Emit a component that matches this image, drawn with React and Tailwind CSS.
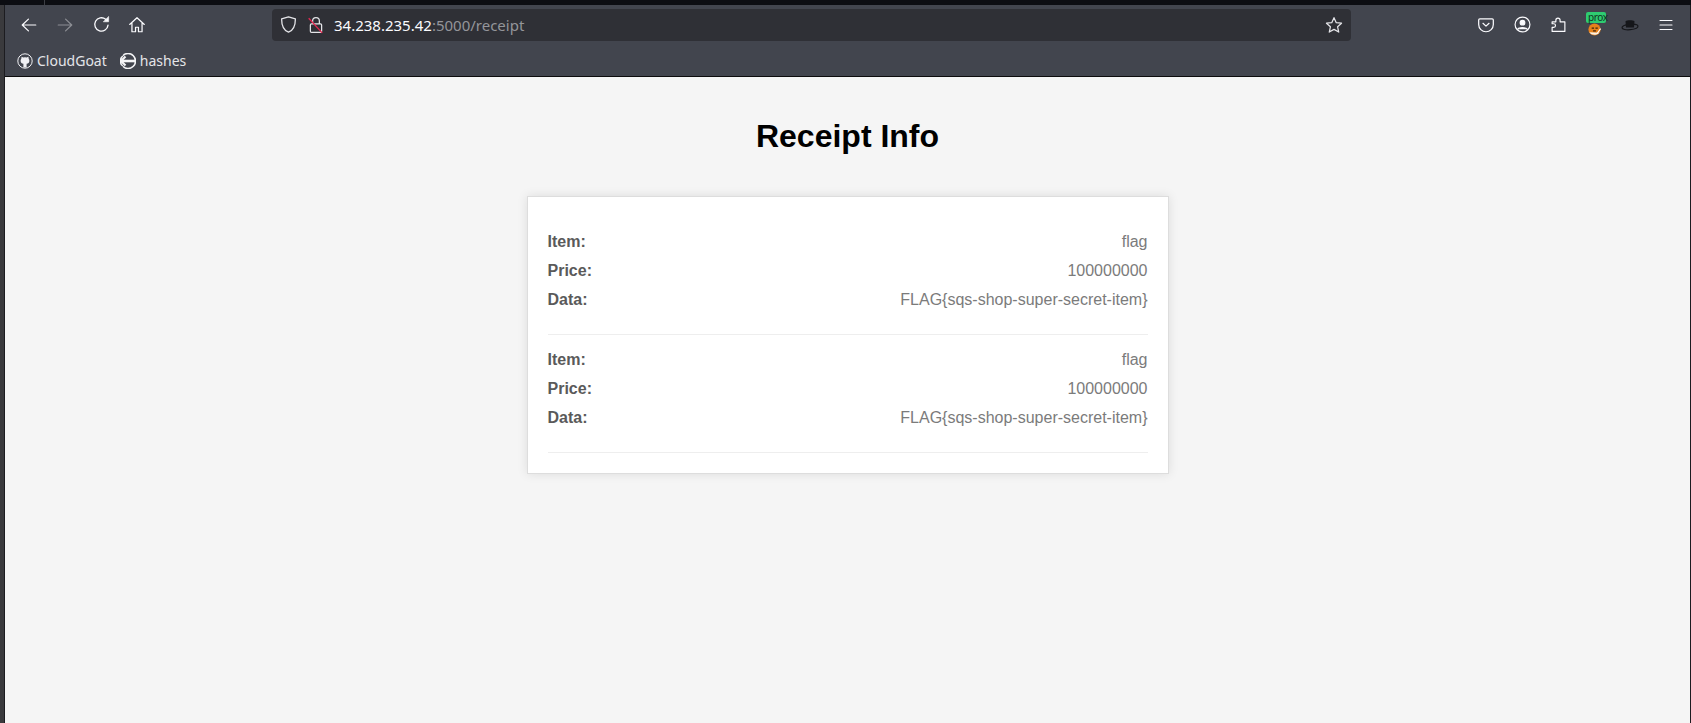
import React from 'react';

const uiFont = { fontFamily: '"Noto Sans", sans-serif' };

const receipts = [
  { item: 'flag', price: '100000000', data: 'FLAG{sqs-shop-super-secret-item}' },
  { item: 'flag', price: '100000000', data: 'FLAG{sqs-shop-super-secret-item}' },
];

const Icon = ({ children, size = 18, className = '' }) => (
  <svg
    width={size}
    height={size}
    viewBox="0 0 16 16"
    fill="none"
    stroke="currentColor"
    strokeWidth="1.100"
    strokeLinecap="round"
    strokeLinejoin="round"
    className={className}
  >
    {children}
  </svg>
);

const ToolButton = ({ children, className = 'text-[#fbfbfe]' }) => (
  <div className={`flex h-8 w-9 items-center justify-center ${className}`}>{children}</div>
);

const GithubFavicon = () => (
  <svg width="16" height="16" viewBox="0 0 16 16" className="text-[#f0f0f4]">
    <circle cx="8" cy="8" r="7.200" fill="none" stroke="currentColor" strokeWidth="1" />
    <path
      fill="currentColor"
      d="M4.600 3.800l1.700.8a6 6 0 0 1 3.400 0l1.700-.8.3 2c.5.6.7 1.200.7 1.900 0 1.900-1.200 2.800-2.800 3v3.700H6.400v-3.700c-1.600-.2-2.800-1.100-2.800-3 0-.7.2-1.300.7-1.900z"
    />
  </svg>
);

const HashesFavicon = () => (
  <svg width="16" height="16" viewBox="0 0 16 16">
    <circle cx="8" cy="8" r="7.500" fill="none" stroke="#f4f4f6" strokeWidth="1.600" />
    <path d="M2 8h13" stroke="#f4f4f6" strokeWidth="2.600" />
    <path d="M5.500 3.500L1 8l4.500 4.500" fill="none" stroke="#f4f4f6" strokeWidth="2.200" />
    <path d="M0 3.500l3 -2M0 12.500l3 2" stroke="#42454e" strokeWidth="1.500" />
  </svg>
);

const FoxIcon = () => (
  <div className="relative h-4 w-4 translate-x-px">
    <svg width="15" height="15" viewBox="0 0 16 16" className="absolute left-0 top-[5px]">
      <circle cx="8" cy="8" r="6.500" fill="#e8811a" />
      <path d="M2.500 11c2 3.500 8 3.500 10.500 .5z" fill="#f7f0e6" />
      <path d="M5 6.500h2.500M9 6.500h2.500M6.500 9.500h3" stroke="#3a2410" strokeWidth="1.200" />
      <path d="M11 12l3.500-5" stroke="#fff" strokeWidth="1.200" />
    </svg>
    <span
      className="absolute -left-[1px] -top-[5px] flex h-[11px] w-5 items-center rounded-[2px] bg-[#2ecc71] pl-[2px] text-[10px] leading-none tracking-[-0.4px] text-[#10331e]"
      style={uiFont}
    >
      prox
    </span>
  </div>
);

const HatIcon = () => (
  <svg width="18" height="12" viewBox="0 0 18 12">
    <ellipse cx="9" cy="8" rx="8" ry="2.700" fill="none" stroke="#15161a" strokeWidth="1.200" transform="rotate(-6 9 8)" />
    <path d="M4.500 2.200C6 1 12 1 13.500 2.200L13 8.500H5z" fill="#15161a" />
  </svg>
);

const Row = ({ label, value }) => (
  <div className="mb-[10px] flex h-[19px] items-center justify-between text-base leading-[19px]">
    <span className="font-bold text-[#5a5a5a]">{label}</span>
    <span className="text-[#7b7b7b]">{value}</span>
  </div>
);

const App = () => (
  <div className="flex h-screen flex-col overflow-hidden bg-[#0c0d12]">
    {/* Window title strip */}
    <div className="flex h-[5px] shrink-0 pl-11">
      <div className="h-full w-px bg-[#3c3e44]" />
    </div>

    <div className="flex min-h-0 flex-1">
      <div className="w-[5px] shrink-0 border-r border-[#1c1c20] bg-[#3a3a3d]" />

      <div className="flex min-w-0 flex-1 flex-col">
        {/* Browser chrome */}
        <div className="h-[72px] shrink-0 border-b border-[#0c0c0d] bg-[#42454e]" style={uiFont}>
          <div className="flex h-[38px] items-center pl-[6px] pr-[6px] pt-[1px]">
            <ToolButton>
              <Icon>
                <path d="M14 8H2M7.500 2.800L2 8l5.500 5.200" />
              </Icon>
            </ToolButton>
            <ToolButton className="text-[#8c8e94]">
              <Icon>
                <path d="M2 8h12M8.500 2.800L14 8l-5.500 5.200" />
              </Icon>
            </ToolButton>
            <ToolButton>
              <Icon size={19}>
                <path d="M13.500 8.500A5.600 5.600 0 1 1 11.500 3.600" />
                <path d="M14 1.500v4.200H9.800z" fill="currentColor" strokeWidth="0.500" />
              </Icon>
            </ToolButton>
            <ToolButton>
              <Icon>
                <path d="M1.500 7.500L8 1.500l6.500 6M3.500 6.500v7.500h3.200v-4h2.600v4h3.200V6.500" />
              </Icon>
            </ToolButton>

            <div className="ml-[117px] flex h-8 w-[1079px] items-center rounded-[4px] bg-[#2f3036] pl-[6px] pr-[7px]">
              <div className="flex w-5 justify-center text-[#e4e4e8]">
                <Icon size={19}>
                  <path d="M8 1.500l5.800 1.800c0 5.500-1.500 9.500-5.800 11.200C3.700 12.800 2.200 8.800 2.200 3.300z" />
                </Icon>
              </div>
              <div className="ml-2 flex w-5 justify-center text-[#e4e4e8]">
                <svg width="18" height="18" viewBox="0 0 16 16" fill="none" strokeWidth="1.100">
                  <path d="M5 7V4.500a3 3 0 0 1 6 0V7" stroke="currentColor" />
                  <rect x="3" y="7" width="10" height="7.500" rx="1" stroke="currentColor" />
                  <path d="M1.500 2l12 13" stroke="#e22850" strokeWidth="1.200" />
                </svg>
              </div>
              <div className="ml-[8px] flex-1 pt-[2px] text-[15px] leading-none">
                <span className="text-[#fbfbfe]">34.238.235.42</span>
                <span className="text-[#94959a]">:5000/receipt</span>
              </div>
              <div className="flex w-5 justify-center text-[#e4e4e8]">
                <Icon size={18}>
                  <path d="M8 1.500l2 4.400 4.700.5-3.500 3.200 1 4.700L8 11.900l-4.200 2.400 1-4.700-3.500-3.200 4.700-.5z" />
                </Icon>
              </div>
            </div>

            <div className="ml-auto flex items-center">
              <ToolButton>
                <Icon>
                  <path d="M2.500 2.500h11c.6 0 1 .4 1 1v4a6.500 6.500 0 0 1-13 0v-4c0-.6.4-1 1-1z" />
                  <path d="M5.300 6.500L8 9l2.700-2.500" />
                </Icon>
              </ToolButton>
              <ToolButton>
                <Icon size={17}>
                  <circle cx="8" cy="8" r="7" />
                  <circle cx="8" cy="6.300" r="2.200" fill="currentColor" />
                  <path d="M3.500 12.500c1-2 8-2 9 0" fill="currentColor" />
                </Icon>
              </ToolButton>
              <ToolButton>
                <Icon size={17}>
                  <path d="M2 5.500h3.500V4a2 2 0 0 1 4 0v1.500H14v9H2v-3.800h1.500a1.700 1.700 0 0 0 0-3.400H2z" />
                </Icon>
              </ToolButton>
              <ToolButton>
                <FoxIcon />
              </ToolButton>
              <ToolButton>
                <HatIcon />
              </ToolButton>
              <ToolButton>
                <Icon size={16}>
                  <path d="M2 3.500h12M2 8h12M2 12.500h12" />
                </Icon>
              </ToolButton>
            </div>
          </div>

          {/* Bookmarks */}
          <div className="flex h-[34px] items-center gap-[13px] pl-3 pt-[2px] text-[14px] leading-none text-[#e4e4e8]">
            <div className="flex items-center gap-[4px]">
              <GithubFavicon />
              <span>CloudGoat</span>
            </div>
            <div className="flex items-center gap-[4px]">
              <HashesFavicon />
              <span>hashes</span>
            </div>
          </div>
        </div>

        {/* Page */}
        <div
          className="min-h-0 flex-1 bg-[#f5f5f5] pt-[41px]"
          style={{ fontFamily: '"Liberation Sans", Arial, sans-serif' }}
        >
          <h1 className="mb-[41px] text-center text-[32px] leading-[37px] font-bold text-black">Receipt Info</h1>

          <div className="mx-auto w-[642px] border border-[#dddddd] bg-white p-5 shadow-[0_0_10px_rgba(0,0,0,0.1)]">
            {receipts.map((receipt, index) => (
              <div key={index} className="border-b border-[#eeeeee] py-[15px]">
                <Row label="Item:" value={receipt.item} />
                <Row label="Price:" value={receipt.price} />
                <Row label="Data:" value={receipt.data} />
              </div>
            ))}
          </div>
        </div>
      </div>

      <div className="w-px shrink-0 bg-[#1c1c20]" />
    </div>
  </div>
);

export default App;
